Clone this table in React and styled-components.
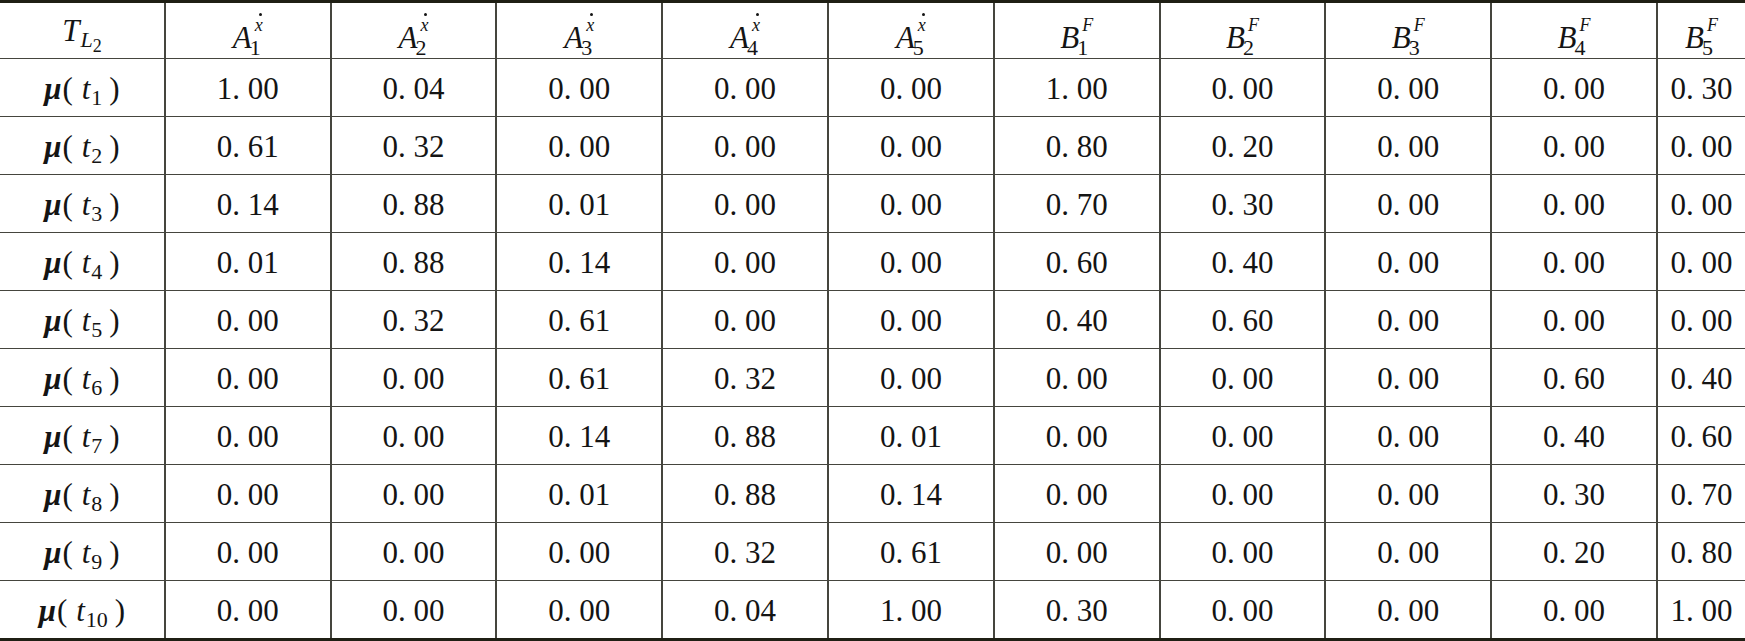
import React from "react";
import styled, { createGlobalStyle } from "styled-components";

const rows = [
  ["1.00", "0.04", "0.00", "0.00", "0.00", "1.00", "0.00", "0.00", "0.00", "0.30"],
  ["0.61", "0.32", "0.00", "0.00", "0.00", "0.80", "0.20", "0.00", "0.00", "0.00"],
  ["0.14", "0.88", "0.01", "0.00", "0.00", "0.70", "0.30", "0.00", "0.00", "0.00"],
  ["0.01", "0.88", "0.14", "0.00", "0.00", "0.60", "0.40", "0.00", "0.00", "0.00"],
  ["0.00", "0.32", "0.61", "0.00", "0.00", "0.40", "0.60", "0.00", "0.00", "0.00"],
  ["0.00", "0.00", "0.61", "0.32", "0.00", "0.00", "0.00", "0.00", "0.60", "0.40"],
  ["0.00", "0.00", "0.14", "0.88", "0.01", "0.00", "0.00", "0.00", "0.40", "0.60"],
  ["0.00", "0.00", "0.01", "0.88", "0.14", "0.00", "0.00", "0.00", "0.30", "0.70"],
  ["0.00", "0.00", "0.00", "0.32", "0.61", "0.00", "0.00", "0.00", "0.20", "0.80"],
  ["0.00", "0.00", "0.00", "0.04", "1.00", "0.30", "0.00", "0.00", "0.00", "1.00"],
];

function Head({ letter, index, sup, dot }) {
  return (
    <Cell pad={14}>
      <Inner>
        <Var>{letter}</Var>
        <Scripts>
          <Sup>{dot ? <Dotted>x</Dotted> : <Var>{sup}</Var>}</Sup>
          <Sub>{index}</Sub>
        </Scripts>
      </Inner>
    </Cell>
  );
}

function Label({ n }) {
  return (
    <Cell pad={2}>
      <Inner>
        <Mu>μ</Mu>
        <Paren>(</Paren>
        <Var>t</Var>
        <SubOnly>{n}</SubOnly>
        <Paren close>)</Paren>
      </Inner>
    </Cell>
  );
}

export default function App() {
  return (
    <>
      <GlobalStyle />
      <Table>
        <Cell pad={0}>
          <Inner>
            <Var>T</Var>
            <SubOnly>
              <Var>L</Var>
              <SubSub>2</SubSub>
            </SubOnly>
          </Inner>
        </Cell>
        {[1, 2, 3, 4, 5].map((i) => (
          <Head key={"a" + i} letter="A" index={i} dot />
        ))}
        {[1, 2, 3, 4, 5].map((i) => (
          <Head key={"b" + i} letter="B" index={i} sup="F" />
        ))}
        {rows.map((r, ri) => (
          <React.Fragment key={ri}>
            <Label n={ri + 1} />
            {r.map((v, ci) => (
              <Cell key={ci} pad={2}>
                <Inner>{v.replace(".", ". ")}</Inner>
              </Cell>
            ))}
          </React.Fragment>
        ))}
      </Table>
    </>
  );
}

const GlobalStyle = createGlobalStyle`
  html, body {
    margin: 0;
    background: #fff;
  }
  body {
    font-family: "Liberation Serif", "Times New Roman", serif;
    color: #141414;
  }
`;

const Table = styled.div`
  width: 1745px;
  display: grid;
  grid-template-columns: repeat(10, 163.8px) 1fr;
  grid-template-rows: 55px repeat(10, 57px);
  column-gap: 2px;
  row-gap: 1px;
  background: #45453e;
  border-top: 3px solid #1f1f14;
  border-bottom: 4px solid #1f1f14;
`;

const Cell = styled.div`
  background: #fff;
  display: flex;
  align-items: center;
  justify-content: center;
  padding-top: ${(p) => p.pad}px;
  box-sizing: border-box;
`;

const Inner = styled.span`
  display: block;
  height: 32px;
  font-size: 31px;
  line-height: 32px;
  white-space: pre;
`;

const Var = styled.span`
  font-style: italic;
`;

const Mu = styled.span`
  font-style: italic;
  font-weight: bold;
`;

const Paren = styled.span`
  margin: ${(p) => (p.close ? "0 0 0 7px" : "0 9px 0 1px")};
`;

const Scripts = styled.span`
  display: inline-flex;
  flex-direction: column;
  align-items: flex-start;
  line-height: 1;
  transform: translateY(-17px);
`;

const Sup = styled.span`
  font-size: 18px;
  line-height: 18px;
  height: 23px;
  padding-left: 3px;
`;

const Sub = styled.span`
  font-size: 22px;
  line-height: 18px;
  margin-left: -2px;
`;

const SubOnly = styled.span`
  font-size: 22px;
  position: relative;
  top: 6px;
  margin-left: 1px;
`;

const SubSub = styled.span`
  font-size: 18px;
  position: relative;
  top: 5px;
`;

const Dotted = styled.span`
  font-style: italic;
  position: relative;
  &::before {
    content: "";
    position: absolute;
    left: 4px;
    top: -2px;
    width: 3px;
    height: 3px;
    border-radius: 50%;
    background: #141414;
  }
`;
